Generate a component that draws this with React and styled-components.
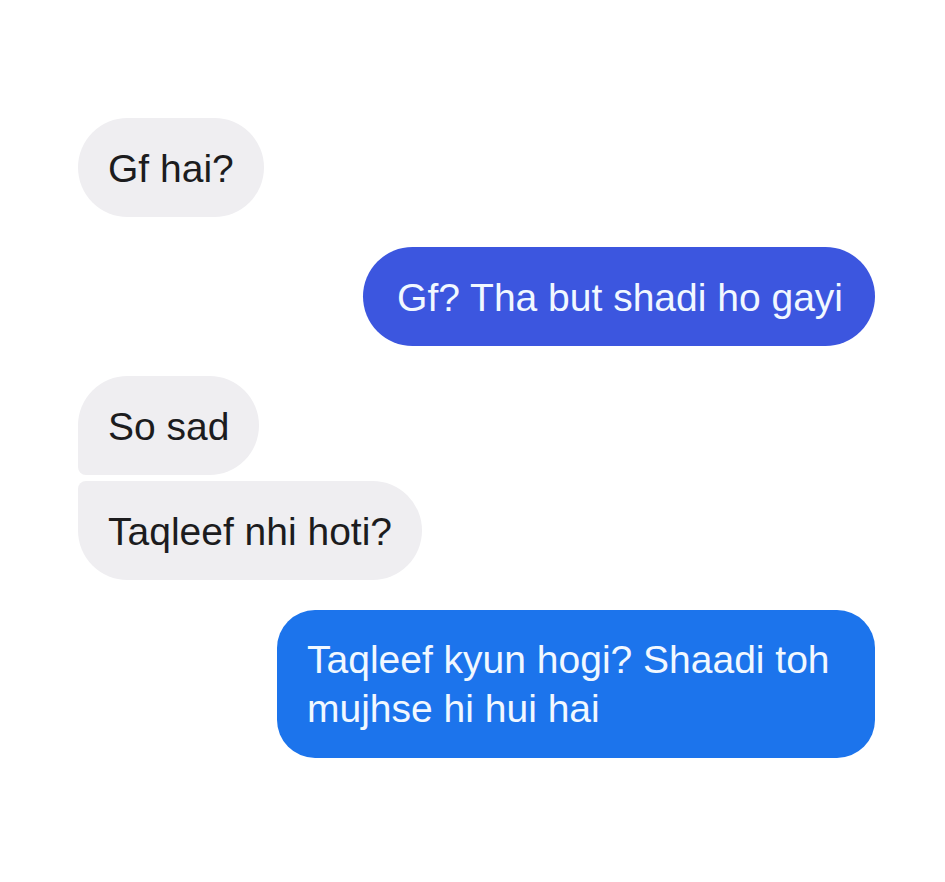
import React from 'react';
import styled, { createGlobalStyle, css } from 'styled-components';

const GlobalStyle = createGlobalStyle`
  html, body {
    margin: 0;
    padding: 0;
    background: #ffffff;
  }
  body {
    font-family: "Liberation Sans", Arial, Helvetica, sans-serif;
  }
`;

const Thread = styled.main`
  width: 945px;
  min-height: 882px;
  box-sizing: border-box;
  padding: 118px 70px 0 78px;
  display: flex;
  flex-direction: column;
  background: #ffffff;
`;

const Group = styled.div`
  display: flex;
  flex-direction: column;
  align-items: ${({ $mine }) => ($mine ? 'flex-end' : 'flex-start')};
  gap: 6px;
  & + & {
    margin-top: 30px;
  }
`;

const full = '50px';
const tight = '8px';

const Bubble = styled.div`
  box-sizing: border-box;
  max-width: 598px;
  padding: 26px 30px 24px;
  font-size: 39px;
  line-height: 49px;
  border-radius: ${full};
  background: ${({ $tone }) =>
    $tone === 'indigo' ? '#3c56df' : $tone === 'blue' ? '#1c74ec' : '#efeef1'};
  color: ${({ $tone }) => ($tone ? '#f1f8ff' : '#1c1c1e')};

  ${({ $pos }) =>
    $pos === 'first' &&
    css`
      border-bottom-left-radius: ${tight};
    `}
  ${({ $pos }) =>
    $pos === 'last' &&
    css`
      border-top-left-radius: ${tight};
    `}
  ${({ $tone }) =>
    $tone === 'indigo' &&
    css`
      padding: 26px 32px 24px 34px;
    `}
  ${({ $tone }) =>
    $tone === 'blue' &&
    css`
      border-radius: 38px;
      padding: 25px 30px;
    `}
`;

export default function App() {
  return (
    <>
      <GlobalStyle />
      <Thread>
        <Group>
          <Bubble>Gf hai?</Bubble>
        </Group>

        <Group $mine>
          <Bubble $tone="indigo">Gf? Tha but shadi ho gayi</Bubble>
        </Group>

        <Group>
          <Bubble $pos="first">So sad</Bubble>
          <Bubble $pos="last">Taqleef nhi hoti?</Bubble>
        </Group>

        <Group $mine>
          <Bubble $tone="blue">Taqleef kyun hogi? Shaadi toh mujhse hi hui hai</Bubble>
        </Group>
      </Thread>
    </>
  );
}
